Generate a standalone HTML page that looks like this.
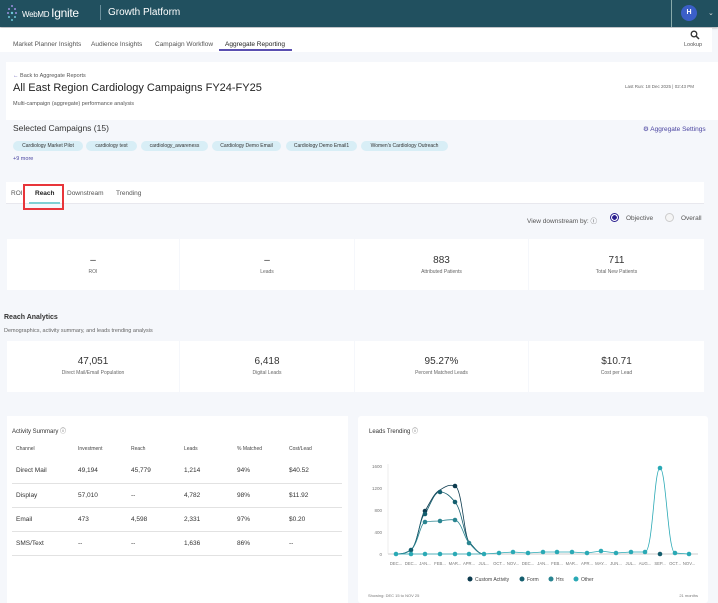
<!DOCTYPE html>
<html><head><meta charset="utf-8"><style>
*{box-sizing:border-box;margin:0;padding:0}
body{width:718px;height:603px;overflow:hidden;background:#f5f7fb;font-family:"Liberation Sans",sans-serif;color:#222;position:relative}
.abs{position:absolute}
.hdr{left:0;top:0;width:718px;height:27px;background:#21505f;box-shadow:0 1px 2px rgba(0,0,0,.3)}
.nav{left:0;top:28px;width:712px;height:24px;background:#fff}
.nav span{position:absolute;top:12px;font-size:6.5px;color:#555}
.card{background:#fff}
.chip{position:absolute;top:141px;height:10px;border-radius:5px;background:#d8eef6;font-size:5px;line-height:10px;text-align:center;color:#333}
.kpi{position:absolute;background:#fff;text-align:center}
.kpi b{display:block;font-size:10px;font-weight:normal;color:#333}
.kpi i{display:block;font-style:normal;font-size:5px;color:#666;margin-top:3px}
table{border-collapse:collapse}
td{font-size:6.5px;color:#333;height:24px;border-bottom:1px solid #e2e2e2}
th{font-size:5px;font-weight:normal;color:#444;text-align:left;height:20px}
</style></head><body>
<div class="abs hdr"></div>
<svg class="abs" style="left:6px;top:4px" width="12" height="18"><g fill="#9c8fe0"><circle cx="6" cy="2" r="1"/><circle cx="3" cy="5" r="1"/><circle cx="9" cy="5" r="1"/><circle cx="6" cy="9" r="1.2" fill="#6fc7d9"/><circle cx="2" cy="9" r="1"/><circle cx="10" cy="9" r="1"/><circle cx="3" cy="13" r="1" fill="#6fc7d9"/><circle cx="9" cy="13" r="1" fill="#6fc7d9"/><circle cx="6" cy="16" r="1" fill="#6fc7d9"/></g></svg>
<div class="abs" style="left:22px;top:6px;color:#fff;font-size:8px;letter-spacing:-.3px">WebMD <span style="font-size:12px">Ignite</span></div>
<div class="abs" style="left:100px;top:5px;width:1px;height:15px;background:#6b8f9b"></div>
<div class="abs" style="left:108px;top:7px;color:#fff;font-size:10px">Growth Platform</div>
<div class="abs" style="left:671px;top:0;width:1px;height:27px;background:#8aa"></div>
<div class="abs" style="left:681px;top:5px;width:16px;height:16px;border-radius:50%;background:#3b5fc8;color:#fff;font-size:7px;font-weight:bold;text-align:center;line-height:16px">H</div>
<div class="abs" style="left:708px;top:9px;color:#ddd;font-size:7px">&#8964;</div>
<div class="abs nav">
<span style="left:13px;top:13px">Market Planner Insights</span><span style="left:91px;top:13px">Audience Insights</span><span style="left:155px;top:13px">Campaign Workflow</span><span style="left:225px;top:13px;color:#222">Aggregate Reporting</span>
<div class="abs" style="left:219px;top:21px;width:73px;height:1.5px;background:#5a4fb0"></div>
<svg class="abs" style="left:690px;top:2px" width="10" height="10"><circle cx="4" cy="4" r="2.8" fill="none" stroke="#333" stroke-width="1.3"/><line x1="6" y1="6" x2="9" y2="9" stroke="#333" stroke-width="1.5"/></svg>
<span style="left:684px;top:14px;font-size:5.5px">Lookup</span>
</div>
<div class="abs card" style="left:6px;top:62px;width:712px;height:58px"></div>
<div class="abs" style="left:13px;top:73px;font-size:5.5px;color:#555"><span style="color:#5a4fb0">&larr;</span> Back to Aggregate Reports</div>
<div class="abs" style="left:13px;top:82px;font-size:11px;color:#222">All East Region Cardiology Campaigns FY24-FY25</div>
<div class="abs" style="left:13px;top:101px;font-size:5.5px;color:#555">Multi-campaign (aggregate) performance analysis</div>
<div class="abs" style="left:625px;top:84px;font-size:4.5px;color:#666">Last Run: 18 Dec 2025 | 02:43 PM</div>
<div class="abs" style="left:13px;top:123px;font-size:8.5px;color:#333">Selected Campaigns (15)</div>
<div class="abs" style="left:643px;top:125px;font-size:6.5px;color:#4a44a0">&#9881; Aggregate Settings</div>
<div class="chip" style="left:13px;width:70px">Cardiology Market Pilot</div>
<div class="chip" style="left:86px;width:51px">cardiology test</div>
<div class="chip" style="left:141px;width:67px">cardiology_awareness</div>
<div class="chip" style="left:212px;width:69px">Cardiology Demo Email</div>
<div class="chip" style="left:286px;width:71px">Cardiology Demo Email1</div>
<div class="chip" style="left:361px;width:87px">Women's Cardiology Outreach</div>
<div class="abs" style="left:13px;top:156px;font-size:5.5px;color:#4a44a0">+9 more</div>
<div class="abs card" style="left:6px;top:182px;width:698px;height:22px;border-bottom:1px solid #e8e8ee"></div>
<div class="abs" style="left:11px;top:190px;font-size:6.5px;color:#555">ROI</div>
<div class="abs" style="left:35px;top:190px;font-size:6.5px;color:#222;font-weight:bold">Reach</div>
<div class="abs" style="left:67px;top:190px;font-size:6.5px;color:#555">Downstream</div>
<div class="abs" style="left:116px;top:190px;font-size:6.5px;color:#555">Trending</div>
<div class="abs" style="left:29px;top:202px;width:31px;height:1.5px;background:#7fd0d4"></div>
<div class="abs" style="left:23px;top:184px;width:41px;height:26px;border:2px solid #e8353a"></div>
<div class="abs" style="left:527px;top:215px;font-size:6.5px;color:#555">View downstream by: &#9432;</div>
<div class="abs" style="left:610px;top:213px;width:9px;height:9px;border-radius:50%;border:1px solid #2a1f8f;background:radial-gradient(#2a1f8f 45%,#fff 50%)"></div>
<div class="abs" style="left:626px;top:215px;font-size:6.5px;color:#555">Objective</div>
<div class="abs" style="left:665px;top:213px;width:9px;height:9px;border-radius:50%;border:1px solid #ccc;background:#f5f5f5"></div>
<div class="abs" style="left:681px;top:215px;font-size:6.5px;color:#555">Overall</div>
<div class="kpi" style="left:7px;top:239px;width:172px;height:51px;padding-top:16px"><b>–</b><i>ROI</i></div>
<div class="kpi" style="left:180px;top:239px;width:174px;height:51px;padding-top:16px"><b>–</b><i>Leads</i></div>
<div class="kpi" style="left:355px;top:239px;width:173px;height:51px;padding-top:16px"><b>883</b><i>Attributed Patients</i></div>
<div class="kpi" style="left:529px;top:239px;width:175px;height:51px;padding-top:16px"><b>711</b><i>Total New Patients</i></div>
<div class="abs" style="left:4px;top:314px;font-size:7px;font-weight:bold;color:#333">Reach Analytics</div>
<div class="abs" style="left:4px;top:328px;font-size:5.5px;color:#666">Demographics, activity summary, and leads trending analysis</div>
<div class="kpi" style="left:7px;top:341px;width:172px;height:51px;padding-top:15px"><b>47,051</b><i>Direct Mail/Email Population</i></div>
<div class="kpi" style="left:180px;top:341px;width:174px;height:51px;padding-top:15px"><b>6,418</b><i>Digital Leads</i></div>
<div class="kpi" style="left:355px;top:341px;width:173px;height:51px;padding-top:15px"><b>95.27%</b><i>Percent Matched Leads</i></div>
<div class="kpi" style="left:529px;top:341px;width:175px;height:51px;padding-top:15px"><b>$10.71</b><i>Cost per Lead</i></div>
<div class="abs card" style="left:7px;top:416px;width:341px;height:187px"></div>
<div class="abs" style="left:12px;top:426px;font-size:6px;color:#333">Activity Summary &#9432;</div>
<table class="abs" style="left:12px;top:439px;width:330px">
<tr><th style="padding-left:4px;width:66px">Channel</th><th style="width:53px">Investment</th><th style="width:53px">Reach</th><th style="width:53px">Leads</th><th style="width:52px">% Matched</th><th>Cost/Lead</th></tr>
<tr><td style="padding-left:4px">Direct Mail</td><td>49,194</td><td>45,779</td><td>1,214</td><td>94%</td><td>$40.52</td></tr>
<tr><td style="padding-left:4px">Display</td><td>57,010</td><td>--</td><td>4,782</td><td>98%</td><td>$11.92</td></tr>
<tr><td style="padding-left:4px">Email</td><td>473</td><td>4,598</td><td>2,331</td><td>97%</td><td>$0.20</td></tr>
<tr><td style="padding-left:4px">SMS/Text</td><td>--</td><td>--</td><td>1,636</td><td>86%</td><td>--</td></tr>
</table>
<div class="abs card" style="left:358px;top:416px;width:350px;height:187px;border-radius:3px"></div>
<div class="abs" style="left:369px;top:426px;font-size:6px;color:#333">Leads Trending &#9432;</div>
<svg class="abs" style="left:358px;top:416px" width="350" height="187" font-family="Liberation Sans" font-size="4.5" fill="#777">
<g text-anchor="end"><text x="24" y="52">1600</text><text x="24" y="74">1200</text><text x="24" y="96">800</text><text x="24" y="118">400</text><text x="24" y="140">0</text></g>
<line x1="30" y1="138" x2="340" y2="138" stroke="#999" stroke-width=".6"/>
<line x1="30" y1="48" x2="30" y2="138" stroke="#ddd" stroke-width=".5"/>
<g text-anchor="middle" font-size="4.2"><text x="38" y="149">DEC...</text><text x="53" y="149">DEC...</text><text x="67" y="149">JAN...</text><text x="82" y="149">FEB...</text><text x="97" y="149">MAR...</text><text x="111" y="149">APR...</text><text x="126" y="149">JUL...</text><text x="141" y="149">OCT...</text><text x="155" y="149">NOV...</text><text x="170" y="149">DEC...</text><text x="185" y="149">JAN...</text><text x="199" y="149">FEB...</text><text x="214" y="149">MAR...</text><text x="229" y="149">APR...</text><text x="243" y="149">MAY...</text><text x="258" y="149">JUN...</text><text x="273" y="149">JUL...</text><text x="287" y="149">AUG...</text><text x="302" y="149">SEP...</text><text x="317" y="149">OCT...</text><text x="331" y="149">NOV...</text></g>
<g fill="none" stroke-width=".8">
<path d="M38 138C45 138 48 137 53 134C60 128 62 100 67 95C73 85 76 77 82 74C88 70 92 68 97 70C104 72 106 120 111 126C117 132 120 138 126 138" stroke="#0d3b4f"/>
<path d="M38 138C45 138 48 137 53 134C60 128 62 100 67 98C73 88 76 76 82 76C88 76 92 80 97 86C104 94 106 120 111 126C117 132 120 138 126 138" stroke="#145e6e"/>
<path d="M38 138C45 138 48 137 53 134C60 128 62 108 67 106C73 105 76 105 82 105C88 104 92 103 97 104C104 106 106 122 111 127C117 133 120 138 126 138" stroke="#2a8591"/>
<path d="M38 138L53 138L67 138L82 138L97 138L111 138L126 138L141 137L155 136L170 137L185 136L199 136L214 136L229 137L243 135L258 137L273 136L287 136C295 136 296 52 302 52C308 52 310 137 317 137L331 138" stroke="#2aa9b5"/>
</g>
<g fill="#0d3b4f"><circle cx="67" cy="95" r="2.3"/><circle cx="97" cy="70" r="2.3"/></g>
<g fill="#145e6e"><circle cx="67" cy="98" r="2.3"/><circle cx="82" cy="76" r="2.3"/><circle cx="97" cy="86" r="2.3"/><circle cx="53" cy="134" r="2.3"/></g>
<g fill="#2a8591"><circle cx="67" cy="106" r="2.3"/><circle cx="82" cy="105" r="2.3"/><circle cx="97" cy="104" r="2.3"/><circle cx="111" cy="127" r="2.3"/></g>
<g fill="#2aa9b5"><circle cx="38" cy="138" r="2.3"/><circle cx="53" cy="138" r="2.3"/><circle cx="67" cy="138" r="2.3"/><circle cx="82" cy="138" r="2.3"/><circle cx="97" cy="138" r="2.3"/><circle cx="111" cy="138" r="2.3"/><circle cx="126" cy="138" r="2.3"/><circle cx="141" cy="137" r="2.3"/><circle cx="155" cy="136" r="2.3"/><circle cx="170" cy="137" r="2.3"/><circle cx="185" cy="136" r="2.3"/><circle cx="199" cy="136" r="2.3"/><circle cx="214" cy="136" r="2.3"/><circle cx="229" cy="137" r="2.3"/><circle cx="243" cy="135" r="2.3"/><circle cx="258" cy="137" r="2.3"/><circle cx="273" cy="136" r="2.3"/><circle cx="287" cy="136" r="2.3"/><circle cx="302" cy="52" r="2.3"/><circle cx="317" cy="137" r="2.3"/><circle cx="331" cy="138" r="2.3"/></g>
<circle cx="302" cy="138" r="2.3" fill="#145e6e"/>
<g font-size="5" fill="#444"><circle cx="112" cy="163" r="2.5" fill="#0d3b4f"/><text x="117" y="165">Custom Activity</text><circle cx="164" cy="163" r="2.5" fill="#145e6e"/><text x="169" y="165">Form</text><circle cx="193" cy="163" r="2.5" fill="#2a8591"/><text x="198" y="165">Hrs</text><circle cx="218" cy="163" r="2.5" fill="#2aa9b5"/><text x="223" y="165">Other</text></g>
<text x="10" y="181" font-size="4">Showing: DEC 15 to NOV 25</text><text x="340" y="181" font-size="4" text-anchor="end">21 months</text>
</svg>
</body></html>
